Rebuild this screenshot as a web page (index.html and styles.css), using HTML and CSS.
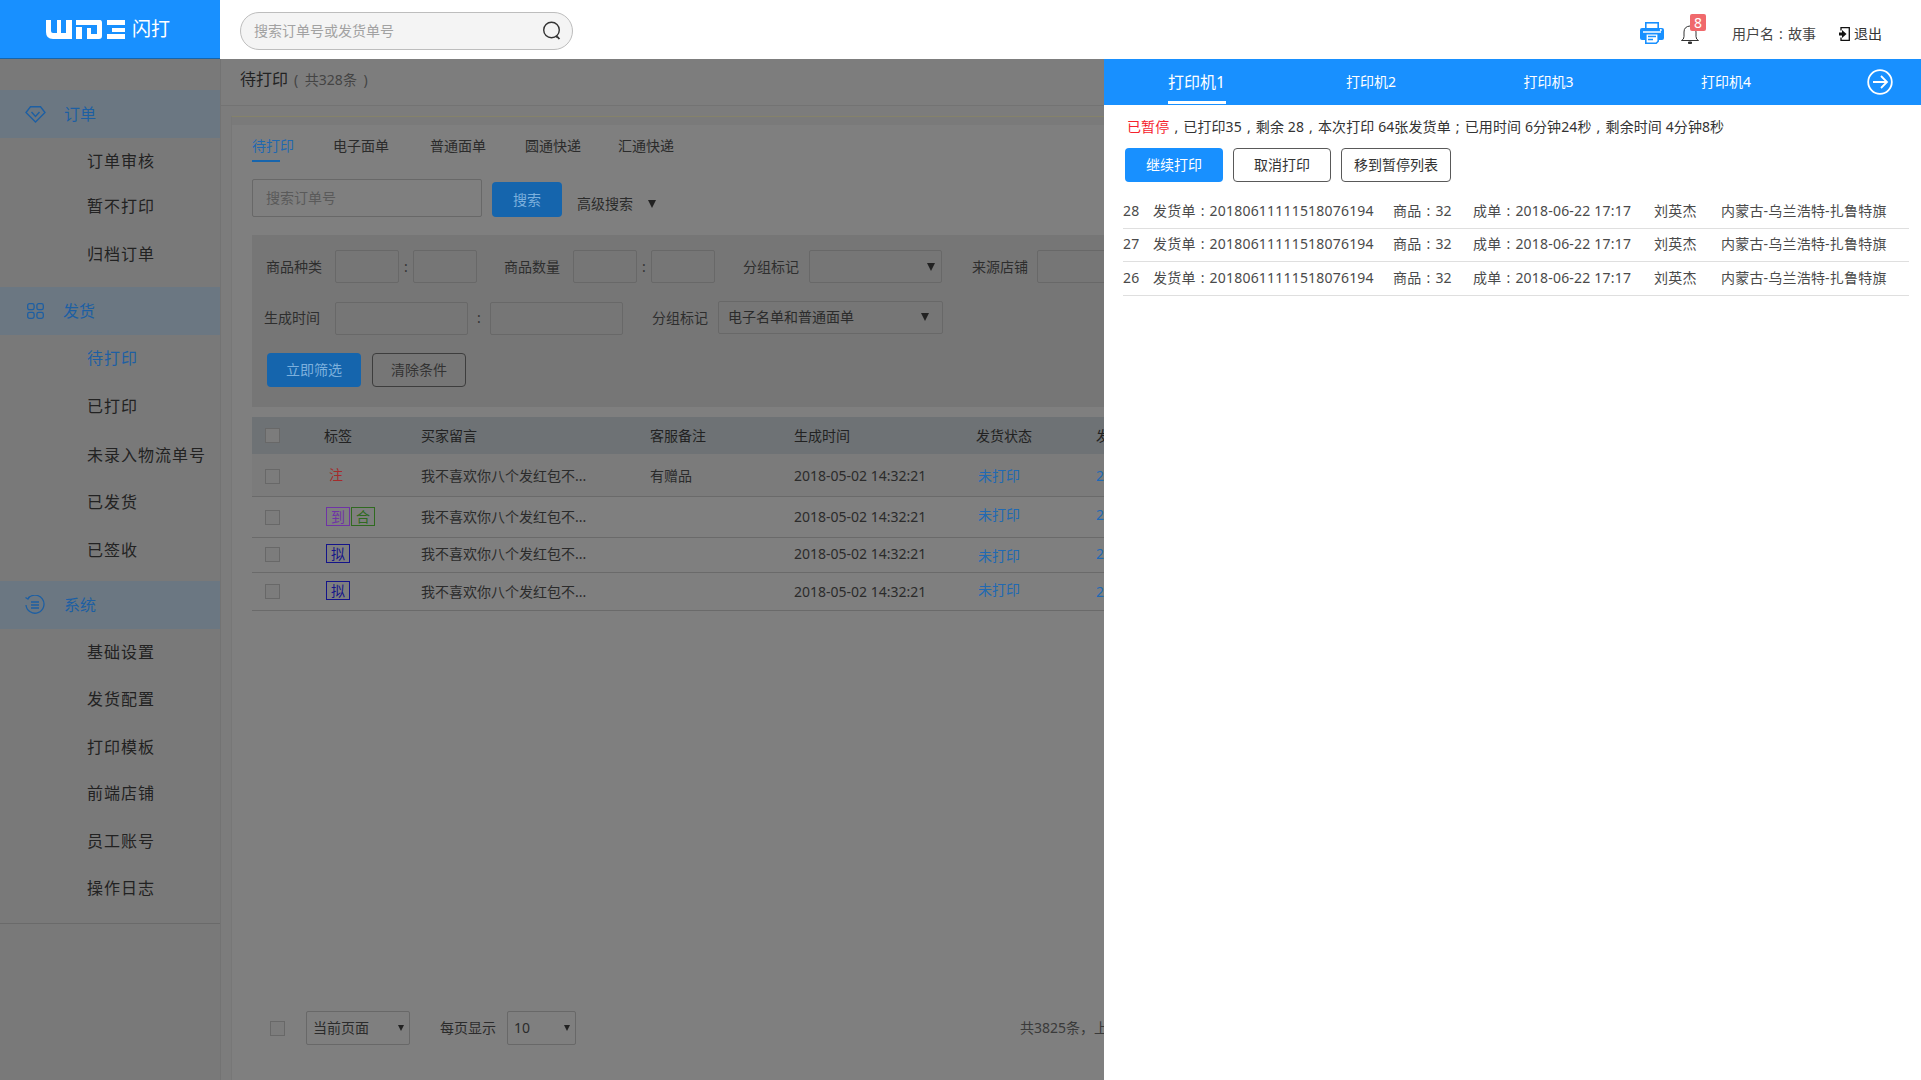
FILE: index.html
```html
<!DOCTYPE html>
<html lang="zh-CN">
<head>
<meta charset="utf-8">
<title>闪打</title>
<link rel="stylesheet" href="styles.css">
</head>
<body>
<div class="app">
  <header class="topbar">
    <div class="brand">
      <svg class="brand-mark" viewBox="0 0 79 19" width="79" height="19" fill="#fff"><path d="M0 0h5v11q0 2 2 2h4V0h4v13h5V0h6v19H7q-7 0-7-7z"/><path d="M30 7h6v12h-6zM30 0h24q2 0 2 3v13q0 3-3 3H41V8h4v6h6V5H30z"/><path d="M61 0h18v5H61zM66 8h13v4H66zM61 14h18v5H61z"/></svg>
      <span class="brand-name">闪打</span>
    </div>
    <div class="global-search">
      <span class="global-search-text">搜索订单号或发货单号</span>
      <svg width="20" height="20" viewBox="0 0 20 20" fill="none" stroke="#333" stroke-width="1.4"><circle cx="9.5" cy="9" r="7.8"/><path d="M14 15.5q2 .2 3.4 2.6" stroke-width="1.8"/></svg>
    </div>
    <div class="top-actions">
      <svg class="act-printer" width="24" height="22" viewBox="0 0 24 22"><rect x="5.800" y=".8" width="12.400" height="6" fill="#fff" stroke="#1890ff" stroke-width="1.600"/><path d="M2 6h20q2 0 2 2v8q0 2-2 2H2q-2 0-2-2V8q0-2 2-2z" fill="#1890ff"/><path d="M3 10h18" stroke="#fff" stroke-width="1.500"/><path d="M5.800 11.800h12.400v7.400l-2 2H5.800z" fill="#fff" stroke="#1890ff" stroke-width="1.600"/><path d="M8 14.500h8M8 17.500h5" stroke="#1890ff" stroke-width="1.400"/><circle cx="20.800" cy="8" r="1" fill="#fff"/></svg>
      <div class="act-bell">
        <svg width="18" height="19" viewBox="0 0 18 19" fill="none" stroke="#333" stroke-width="1"><path d="M.5 15.500q2.500-1 2.500-4V7q0-5.500 6-6 6 .5 6 6v4.500q0 3 2.500 4z"/><path d="M7.500 17h3v1.500h-3z" fill="#333"/></svg>
        <span class="badge">8</span>
      </div>
      <span class="user">用户名<i class="sep">:</i>故事</span>
      <svg class="act-logout" width="11" height="14" viewBox="0 0 11 14"><path d="M2 3.500V.7h8.300v12.600H2v-2.800" fill="none" stroke="#111" stroke-width="1.300"/><path d="M0 5.500h3V3l4.500 4L3 11V8.500H0z" fill="#111"/></svg>
      <span class="logout">退出</span>
    </div>
  </header>

  <div class="stage">
    <aside class="sidebar">
      <div class="nav-group">
        <svg width="21" height="17" viewBox="0 0 21 17" fill="none" stroke="#1d5fa3" stroke-width="1.400"><path d="M5.500.7h10L20 6.500 10.500 16 1 6.500z"/><path d="M6.500 6l4 4.500 4-4.500"/></svg>
        <span>订单</span>
      </div>
      <a class="nav-item">订单审核</a>
      <a class="nav-item mn1">暂不打印</a>
      <a class="nav-item m2">归档订单</a>
      <div class="nav-group g-next">
        <svg width="17" height="16" viewBox="0 0 17 16" fill="none" stroke="#1d5fa3" stroke-width="1.300"><rect x=".7" y=".7" width="6.400" height="6" rx="1.800"/><rect x="9.900" y=".7" width="6.400" height="6" rx="1.800"/><rect x=".7" y="9.300" width="6.400" height="6" rx="1.800"/><rect x="9.900" y="9.300" width="6.400" height="6" rx="1.800"/></svg>
        <span>发货</span>
      </div>
      <a class="nav-item active">待打印</a>
      <a class="nav-item m2">已打印</a>
      <a class="nav-item m3">未录入物流单号</a>
      <a class="nav-item m1">已发货</a>
      <a class="nav-item m2">已签收</a>
      <div class="nav-group g-last">
        <svg width="20" height="20" viewBox="0 0 20 20" fill="none" stroke="#1d5fa3" stroke-width="1.300"><path d="M3 3.500A9 9 0 1 1 1 10"/><path d="M.5 2.500L3 4l1.500-2.500M6 7h8M6 10h8M6 13h8"/></svg>
        <span>系统</span>
      </div>
      <a class="nav-item">基础设置</a>
      <a class="nav-item m1">发货配置</a>
      <a class="nav-item m2">打印模板</a>
      <a class="nav-item">前端店铺</a>
      <a class="nav-item m2">员工账号</a>
      <a class="nav-item m1">操作日志</a>
      <div class="nav-end"></div>
    </aside>

    <main class="main">
      <div class="page-title">待打印<small>( 共328条 )</small></div>
      <section class="card">
        <div class="card-inner">
          <nav class="tabs">
            <a class="tab tab-active">待打印</a>
            <a class="tab t2">电子面单</a>
            <a class="tab t3">普通面单</a>
            <a class="tab t4">圆通快递</a>
            <a class="tab t5">汇通快递</a>
          </nav>
          <div class="search-row">
            <input class="search-input" placeholder="搜索订单号">
            <button class="btn btn-primary btn-search">搜索</button>
            <span class="adv">高级搜索<i class="tri adv-tri"></i></span>
          </div>
          <div class="filters">
            <div class="f-row f-row1">
              <label class="f-label l-a">商品种类</label>
              <input class="f-input w64"><span class="colon">:</span><input class="f-input w64">
              <label class="f-label l-b">商品数量</label>
              <input class="f-input w64"><span class="colon">:</span><input class="f-input w64">
              <label class="f-label l-c">分组标记</label>
              <div class="select s-group"><i class="tri"></i></div>
              <label class="f-label l-d">来源店铺</label>
              <input class="f-input w150">
            </div>
            <div class="f-row f-row2">
              <label class="f-label l-e">生成时间</label>
              <input class="f-input w133"><span class="colon c-wide">:</span><input class="f-input w133">
              <label class="f-label l-f">分组标记</label>
              <div class="select s-wide">电子名单和普通面单<i class="tri"></i></div>
            </div>
            <div class="f-actions">
              <button class="btn btn-primary btn-filter">立即筛选</button>
              <button class="btn btn-ghost btn-filter">清除条件</button>
            </div>
          </div>
          <div class="table">
            <div class="tr thead"><span class="cb"></span><span>标签</span><span>买家留言</span><span>客服备注</span><span>生成时间</span><span>发货状态</span><span>发货单号</span></div>
            <div class="tr r1"><span class="cb"></span><span class="tagcell"><b class="flag-red">注</b></span><span>我不喜欢你八个发红包不...</span><span>有赠品</span><span>2018-05-02 14:32:21</span><a class="link st">未打印</a><a class="link">2018061111</a></div>
            <div class="tr r2"><span class="cb"></span><span class="tagcell"><b class="tag tag-purple">到</b><b class="tag tag-green">合</b></span><span>我不喜欢你八个发红包不...</span><span></span><span>2018-05-02 14:32:21</span><a class="link st st-up">未打印</a><a class="link st-up">2018061111</a></div>
            <div class="tr r3"><span class="cb"></span><span class="tagcell"><b class="tag tag-navy">拟</b></span><span>我不喜欢你八个发红包不...</span><span></span><span>2018-05-02 14:32:21</span><a class="link st st-down">未打印</a><a class="link">2018061111</a></div>
            <div class="tr r4"><span class="cb"></span><span class="tagcell"><b class="tag tag-navy">拟</b></span><span>我不喜欢你八个发红包不...</span><span></span><span>2018-05-02 14:32:21</span><a class="link st st-up">未打印</a><a class="link">2018061111</a></div>
          </div>
          <div class="pager">
            <span class="cb"></span>
            <div class="select s-page">当前页面<i class="tri tri-sm"></i></div>
            <span class="per">每页显示</span>
            <div class="select s-size">10<i class="tri tri-sm"></i></div>
            <span class="total">共3825条，上一页</span>
          </div>
        </div>
      </section>
    </main>

    <aside class="panel">
      <div class="p-tabs">
        <a class="p-tab p-on">打印机1</a>
        <a class="p-tab">打印机2</a>
        <a class="p-tab">打印机3</a>
        <a class="p-tab">打印机4</a>
        <svg class="p-close" width="26" height="26" viewBox="0 0 26 26" fill="none" stroke="#fff" stroke-width="1.800"><circle cx="13" cy="13" r="11.800"/><path d="M6 13h14M14 7l6 6-6 6"/></svg>
      </div>
      <div class="p-body">
        <p class="p-status"><em>已暂停</em><i class="sep">,</i>已打印35<i class="sep">,</i>剩余 28<i class="sep">,</i>本次打印 64张发货单<i class="sep">;</i>已用时间 6分钟24秒<i class="sep">,</i>剩余时间 4分钟8秒</p>
        <div class="p-btns">
          <button class="btn btn-solid pb-a">继续打印</button>
          <button class="btn btn-line pb-a">取消打印</button>
          <button class="btn btn-line pb-b">移到暂停列表</button>
        </div>
        <div class="p-list">
          <div class="p-row"><span>28</span><span>发货单<i class="sep">:</i>20180611111518076194</span><span>商品<i class="sep">:</i>32</span><span>成单<i class="sep">:</i>2018-06-22 17:17</span><span>刘英杰</span><span>内蒙古-乌兰浩特-扎鲁特旗</span></div>
          <div class="p-row"><span>27</span><span>发货单<i class="sep">:</i>20180611111518076194</span><span>商品<i class="sep">:</i>32</span><span>成单<i class="sep">:</i>2018-06-22 17:17</span><span>刘英杰</span><span>内蒙古-乌兰浩特-扎鲁特旗</span></div>
          <div class="p-row"><span>26</span><span>发货单<i class="sep">:</i>20180611111518076194</span><span>商品<i class="sep">:</i>32</span><span>成单<i class="sep">:</i>2018-06-22 17:17</span><span>刘英杰</span><span>内蒙古-乌兰浩特-扎鲁特旗</span></div>
        </div>
      </div>
    </aside>
  </div>
</div>
</body>
</html>
```
FILE: styles.css
```css
* { box-sizing: border-box; }
html, body { margin: 0; padding: 0; }
body {
  width: 1921px; height: 1080px; overflow: hidden;
  font: 14px/20px "Noto Sans", "Noto Sans CJK SC", sans-serif;
  color: #333; background: #7d7d7d;
}
a { text-decoration: none; }
input, button { font: inherit; margin: 0; outline: none; }
.sep { display: inline-block; width: 14px; font-style: normal; text-align: center; }
.app { display: flex; flex-direction: column; height: 1080px; }

/* top bar */
.topbar { display: flex; align-items: stretch; height: 59px; flex: none; background: #fff; position: relative; z-index: 3; }
.brand { width: 220px; flex: none; background: #1890ff; display: flex; align-items: center; padding: 0 0 0 46px; gap: 7px; border-bottom: 1px solid #1565ac; }
.brand-name { color: #fff; font-size: 19px; line-height: 24px; }
.global-search { margin: 12px 0 0 20px; width: 333px; height: 38px; background: #f4f4f4; border: 1px solid #bdbdbd; border-radius: 19px; display: flex; align-items: center; justify-content: space-between; padding: 0 10px 0 13px; }
.global-search-text { color: #a2a2a2; }
.top-actions { margin-left: auto; display: flex; align-items: center; padding: 0 39px 0 0; height: 59px; }
.act-printer { margin-top: 7px; }
.act-bell { position: relative; margin: 10px 0 0 17px; width: 18px; height: 19px; }
.badge { position: absolute; left: 9px; top: -11px; width: 16px; height: 17px; background: #f0696c; color: #fff; font-size: 14px; line-height: 17px; text-align: center; border-radius: 2px; }
.user { margin: 9px 0 0 33px; width: 84px; color: #444; white-space: nowrap; }
.act-logout { margin: 8px 0 0 23px; }
.logout { margin: 9px 0 0 4px; color: #333; }

/* page */
.stage { flex: 1; display: flex; position: relative; overflow: hidden; }
.sidebar { width: 221px; flex: none; background: #797979; border-right: 1px solid #737373; padding-top: 31px; }
.nav-group { height: 48px; background: #6b7782; display: flex; align-items: center; padding-left: 25px; gap: 18px; color: #1d5fa3; font-size: 16px; }
.nav-group svg { flex: none; }
.g-next { margin-top: 10px; padding-left: 27px; }
.g-last { margin-top: 8px; }
.g-next span { margin-left: 1px; }
.g-last span { margin-left: 1px; }
.nav-item { display: block; height: 46px; line-height: 46px; padding-left: 87px; font-size: 16px; letter-spacing: 1px; color: #222; }
.nav-item.active { color: #1d5fa3; }
.mn1 { margin-top: -1px; }
.m1 { margin-top: 1px; }
.m2 { margin-top: 2px; }
.m3 { margin-top: 3px; }
.nav-end { margin-top: 12px; border-top: 1px solid #6a6a6a; }

.main { flex: 1; min-width: 0; display: flex; flex-direction: column; background: #7c7c7c; overflow: hidden; }
.page-title { height: 47px; flex: none; padding: 10px 0 0 19px; font-size: 16px; color: #222; border-bottom: 1px solid #737373; background: #7d7d7d; }
.page-title small { font-size: 14px; color: #444; margin-left: 6px; word-spacing: 3px; }
.card { margin: 10px 0 0 10px; flex: 1; border-top: 1px solid #85826a; padding-top: 8px; background: #7a7a7a; border-left: 1px solid #777; }
.card-inner { height: 100%; background: #7f7f7f; padding: 0 0 0 20px; width: 1100px; display: flex; flex-direction: column; }

.tabs { display: flex; height: 36px; padding-top: 11px; }
.tab { height: 25px; color: #2b2b2b; line-height: 20px; }
.tab-active { color: #1f68b0; width: 28px; white-space: nowrap; border-bottom: 2px solid #1765ad; padding-bottom: 3px; height: 26px; margin-right: 53px; }
.t2 { margin-right: 41px; }
.t3 { margin-right: 39px; }
.t4 { margin-right: 37px; }

.search-row { display: flex; align-items: flex-start; margin-top: 19px; height: 36px; }
.search-input { width: 230px; height: 38px; margin-top: -1px; background: transparent; border: 1px solid #686868; border-radius: 2px; padding: 0 13px 2px; color: #333; }
.search-input::placeholder { color: #5a5a5a; opacity: 1; }
.btn { display: block; border-radius: 4px; text-align: center; padding: 0; }
.btn-primary { background: #1565ad; border: 0; color: #7cb0dd; }
.btn-search { width: 70px; height: 35px; margin: 2px 0 0 10px; }
.adv { margin: 14px 0 0 15px; color: #2b2b2b; display: flex; align-items: center; }
.tri { display: block; width: 0; height: 0; border: 4.500px solid transparent; border-top: 8px solid #222; border-bottom: 0; }
.adv-tri { margin-left: 15px; }
.tri-sm { border-width: 6px 3.500px 0; border-top-color: #222; }

.filters { margin-top: 19px; width: 100%; height: 172px; background: #767676; padding-top: 15px; }
.f-row { display: flex; align-items: center; }
.f-row1 { height: 33px; }
.f-row2 { height: 34px; margin-top: 18px; }
.f-label { color: #2e2e2e; flex: none; }
.l-a { margin-left: 14px; width: 69px; }
.l-b { margin-left: 27px; width: 69px; }
.l-c { margin-left: 28px; width: 66px; }
.l-d { margin-left: 30px; width: 65px; }
.l-e { margin-left: 12px; width: 71px; }
.l-f { margin-left: 29px; width: 66px; }
.f-input { flex: none; height: 33px; background: transparent; border: 1px solid #686868; border-radius: 2px; }
.w64 { width: 64px; }
.w133 { width: 133px; }
.w150 { width: 150px; }
.colon { width: 14px; flex: none; text-align: center; color: #333; }
.c-wide { width: 22px; }
.select { flex: none; height: 34px; border: 1px solid #686868; border-radius: 2px; display: flex; align-items: center; justify-content: space-between; padding: 0 13px 0 9px; color: #2b2b2b; }
.s-group { width: 133px; height: 33px; justify-content: flex-end; padding-right: 6px; }
.s-wide { width: 225px; height: 33px; margin-top: -2px; }
.f-actions { display: flex; gap: 11px; margin: 18px 0 0 15px; }
.btn-filter { width: 94px; height: 34px; }
.btn-ghost { background: transparent; border: 1px solid #3d3d3d; color: #333; }

.table { margin-top: 10px; width: 100%; }
.tr { display: grid; grid-template-columns: 72px 97px 229px 144px 182px 120px 200px; align-items: center; color: #2b2b2b; border-bottom: 1px solid #6a6a6a; white-space: nowrap; }
.tr .cb { margin-left: 13px; }
.thead { height: 37px; background: #6e7275; border-bottom: 0; color: #222; }
.r1 { height: 43px; background: #7b7b7b; padding-top: 2px; }
.r2 { height: 41px; }
.r3 { height: 35px; padding-bottom: 2px; }
.r4 { height: 38px; }
.cb { display: block; width: 15px; height: 15px; border: 1px solid #686868; background: #7c7c7c; }
.link { color: #2069b3; }
.st { margin-left: 2px; }
.st-up { margin-bottom: 4px; }
.st-down { margin-top: 4px; }
.tagcell { display: flex; gap: 1px; margin-left: 2px; margin-bottom: 2px; }
.tag { width: 24px; height: 19px; border: 1px solid; font-weight: 400; font-size: 14px; line-height: 17px; text-align: center; }
.tag-purple { color: #6f33a6; border-color: #6f33a6; }
.tag-green { color: #2f6a1f; border-color: #2f6a1f; }
.tag-navy { color: #14148a; border-color: #14148a; }
.flag-red { font-weight: 400; color: #a52b2b; padding-left: 3px; }

.pager { margin-top: auto; margin-bottom: 35px; display: flex; align-items: center; height: 34px; padding-left: 18px; color: #2b2b2b; position: relative; }
.s-page { width: 104px; margin-left: 21px; padding: 0 5px 0 6px; }
.per { margin-left: 30px; width: 67px; }
.s-size { width: 69px; padding: 0 5px 0 6px; }
.total { margin-left: 444px; color: #3a3a3a; white-space: nowrap; }

/* printer panel */
.panel { position: absolute; left: 1104px; top: 0; width: 817px; height: 1021px; background: #fff; z-index: 2; }
.p-tabs { height: 46px; background: #1890ff; display: flex; align-items: stretch; position: relative; padding-left: 64px; }
.p-tab { color: #fff; width: 177.500px; padding-right: 122px; white-space: nowrap; line-height: 46px; font-size: 14px; }
.p-on { font-size: 16px; width: 58px; padding: 0; margin-right: 120px; height: 45px; border-bottom: 3px solid #fff; line-height: 46px; }
.p-close { position: absolute; left: 763px; top: 10px; }
.p-body { padding: 12px 12px 0 19px; }
.p-status { margin: 0 0 0 4px; color: #333; white-space: nowrap; letter-spacing: .1px; }
.p-status em { font-style: normal; color: #f5222d; }
.p-btns { display: flex; gap: 10px; margin: 11px 0 0 2px; }
.pb-a { width: 98px; height: 34px; }
.pb-b { width: 110px; height: 34px; }
.btn-solid { background: #1890ff; border: 0; color: #fff; }
.btn-line { background: #fff; border: 1px solid #595959; color: #333; }
.p-list { margin-top: 13px; }
.p-row { display: grid; grid-template-columns: 30px 240px 80px 181px 67px 1fr; height: 34px; padding-bottom: 2px; align-items: center; border-bottom: 1px solid #dfdfdf; white-space: nowrap; color: #4a4a4a; letter-spacing: .2px; }
.p-row:nth-child(2) { height: 33px; }
```
